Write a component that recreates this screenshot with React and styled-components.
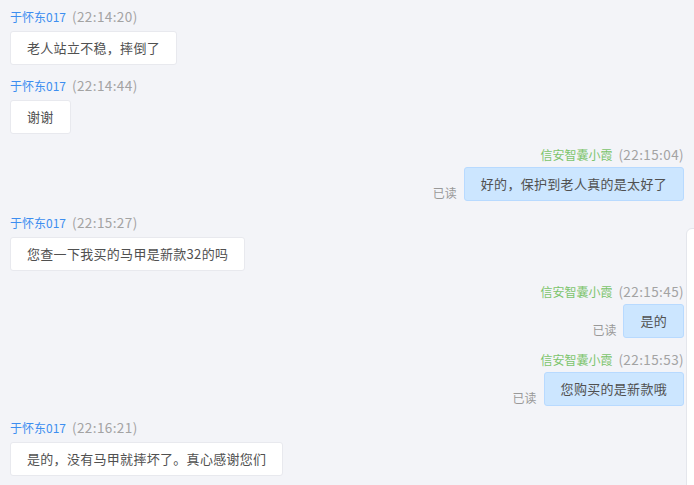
import styled, { createGlobalStyle } from 'styled-components'

const GlobalStyle = createGlobalStyle`
  html, body {
    margin: 0;
    padding: 0;
    background: #f3f4f8;
  }
  body {
    font-family: "Noto Sans CJK SC", "Noto Sans", sans-serif;
  }
`

const StyledChat = styled.div`
  position: relative;
  width: 694px;
  height: 485px;
  overflow: hidden;
  box-sizing: border-box;
  padding: 8px 10px 0;
  background: #f3f4f8;
  display: flex;
  flex-direction: column;
`

const StyledMessage = styled.div`
  display: flex;
  flex-direction: column;
  align-items: ${(p) => (p.$mine ? 'flex-end' : 'flex-start')};
  gap: ${(p) => (p.$mine ? '5px' : '7px')};
  margin-bottom: ${(p) => (p.$mine ? '13px' : '12px')};
`

const StyledMeta = styled.div`
  height: 16px;
  font-size: 12px;
  line-height: 16px;
  color: #a3a3a3;
  white-space: nowrap;
`

const StyledName = styled.span`
  color: ${(p) => (p.$mine ? '#7cc46c' : '#3d8ef0')};
  margin-right: 6px;
`

const StyledTime = styled.span`
  font-size: 13.5px;
  line-height: 16px;
  letter-spacing: 0.4px;
`

const StyledRow = styled.div`
  display: flex;
  align-items: flex-end;
  gap: 7px;
`

const StyledRead = styled.span`
  font-size: 12px;
  line-height: 16px;
  color: #999;
`

const StyledBubble = styled.div`
  box-sizing: border-box;
  height: 34px;
  padding: 7px 16px;
  font-size: 13px;
  line-height: 18px;
  letter-spacing: 0.3px;
  color: #505050;
  white-space: nowrap;
  border-radius: 3px;
  background: ${(p) => (p.$mine ? '#cce6ff' : '#ffffff')};
  border: 1px solid ${(p) => (p.$mine ? '#b8daff' : '#e8e9ee')};
`

const StyledEdgePanel = styled.div`
  position: absolute;
  top: 228px;
  right: -6px;
  width: 12px;
  height: 300px;
  background: #ffffff;
  border: 1px solid #e4e6ec;
  border-radius: 6px 0 0 0;
`

const messages = [
  { mine: false, name: '于怀东017', time: '22:14:20', text: '老人站立不稳，摔倒了' },
  { mine: false, name: '于怀东017', time: '22:14:44', text: '谢谢' },
  { mine: true, name: '信安智囊小霞', time: '22:15:04', text: '好的，保护到老人真的是太好了' },
  { mine: false, name: '于怀东017', time: '22:15:27', text: '您查一下我买的马甲是新款32的吗' },
  { mine: true, name: '信安智囊小霞', time: '22:15:45', text: '是的' },
  { mine: true, name: '信安智囊小霞', time: '22:15:53', text: '您购买的是新款哦' },
  { mine: false, name: '于怀东017', time: '22:16:21', text: '是的，没有马甲就摔坏了。真心感谢您们' },
]

function Message({ mine, name, time, text }) {
  return (
    <StyledMessage $mine={mine}>
      <StyledMeta>
        <StyledName $mine={mine}>{name}</StyledName>
        <StyledTime>({time})</StyledTime>
      </StyledMeta>
      <StyledRow>
        {mine && <StyledRead>已读</StyledRead>}
        <StyledBubble $mine={mine}>{text}</StyledBubble>
      </StyledRow>
    </StyledMessage>
  )
}

export default function App() {
  return (
    <>
      <GlobalStyle />
      <StyledChat>
        {messages.map((m, i) => (
          <Message key={i} {...m} />
        ))}
        <StyledEdgePanel />
      </StyledChat>
    </>
  )
}
